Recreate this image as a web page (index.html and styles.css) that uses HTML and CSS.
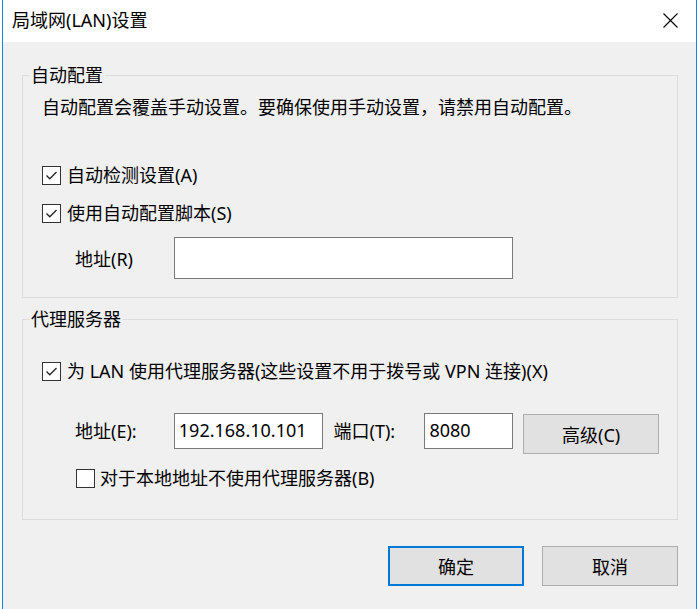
FILE: index.html
```html
<!DOCTYPE html>
<html lang="zh-CN">
<head>
<meta charset="utf-8">
<title>局域网(LAN)设置</title>
<link rel="stylesheet" href="styles.css">
</head>
<body>
<div class="window">
  <div class="titlebar">
    <span class="title">局域网(LAN)设置</span>
    <svg class="close" width="15" height="15" viewBox="0 0 15 15"><path d="M0.5 0.5 L14.5 14.5 M14.5 0.5 L0.5 14.5" stroke="#000" stroke-width="1.1" fill="none"/></svg>
  </div>
  <div class="content">
    <fieldset class="group">
      <legend class="legend">自动配置</legend>
      <div class="group-body auto">
        <div class="desc">自动配置会覆盖手动设置。要确保使用手动设置，请禁用自动配置。</div>
        <label class="check first"><span class="box checked"><svg width="17" height="17" viewBox="0 0 17 17"><path d="M3.5 8.5 L6.8 11.8 L13.5 5" stroke="#222" stroke-width="1.3" fill="none"/></svg></span><span>自动检测设置(A)</span></label>
        <label class="check second"><span class="box checked"><svg width="17" height="17" viewBox="0 0 17 17"><path d="M3.5 8.5 L6.8 11.8 L13.5 5" stroke="#222" stroke-width="1.3" fill="none"/></svg></span><span>使用自动配置脚本(S)</span></label>
        <div class="field-row script">
          <span class="field-label">地址(R)</span>
          <span class="input wide"></span>
        </div>
      </div>
    </fieldset>
    <fieldset class="group proxy">
      <legend class="legend">代理服务器</legend>
      <div class="group-body prox">
        <label class="check"><span class="box checked"><svg width="17" height="17" viewBox="0 0 17 17"><path d="M3.5 8.5 L6.8 11.8 L13.5 5" stroke="#222" stroke-width="1.3" fill="none"/></svg></span><span>为 LAN 使用代理服务器(这些设置不用于拨号或 VPN 连接)(X)</span></label>
        <div class="field-row server">
          <span class="field-label addr">地址(E):</span>
          <span class="input ip">192.168.10.101</span>
          <span class="field-label port">端口(T):</span>
          <span class="input portval">8080</span>
          <span class="btn adv">高级(C)</span>
        </div>
        <label class="check bypass"><span class="box"></span><span>对于本地地址不使用代理服务器(B)</span></label>
      </div>
    </fieldset>
    <div class="actions">
      <span class="btn ok">确定</span>
      <span class="btn">取消</span>
    </div>
  </div>
</div>
</body>
</html>
```

FILE: styles.css
```css
html, body {
  margin: 0;
  padding: 0;
  background: #ffffff;
}
body {
  font-family: "Noto Sans", "Noto Sans CJK SC", sans-serif;
  font-size: 18px;
  color: #000;
}
.window {
  margin-left: 2px;
  width: 695px;
  height: 609px;
  box-sizing: border-box;
  border-left: 1px solid #1883d7;
  border-right: 1px solid #1883d7;
  display: flex;
  flex-direction: column;
  overflow: hidden;
}
.titlebar {
  height: 42px;
  flex: none;
  background: #fff;
  display: flex;
  align-items: center;
  justify-content: space-between;
  padding: 0 18px 2px 9px;
  box-sizing: border-box;
}
.title {
  line-height: 24px;
}
.close {
  display: block;
}
.content {
  flex: 1;
  background: #f0f0f0;
  padding: 21px 18px 0 19px;
  display: flex;
  flex-direction: column;
}
.group {
  margin: 0;
  padding: 0;
  min-width: 0;
  border: 1px solid #dcdcdc;
}
.group.proxy {
  margin-top: 9px;
}
.legend {
  margin-left: 6px;
  padding: 0 2px;
  line-height: 24px;
}
.group-body {
  display: flex;
  flex-direction: column;
  padding: 8px 18px 18px 19px;
}
.group-body.prox {
  padding-top: 28px;
  padding-bottom: 29px;
}
.desc {
  line-height: 24px;
}
.check {
  display: flex;
  align-items: center;
  gap: 6px;
  line-height: 24px;
}
.check.first {
  margin-top: 44px;
}
.check.second {
  margin-top: 14px;
}
.box {
  width: 17px;
  height: 17px;
  border: 1px solid #333;
  background: #fff;
  display: block;
  flex: none;
}
.box svg {
  display: block;
}
.field-row {
  display: flex;
  align-items: center;
  padding-left: 33px;
  margin-top: 12px;
}
.field-row.script .field-label {
  width: 99px;
}
.input {
  box-sizing: border-box;
  background: #fff;
  border: 1px solid #7a7a7a;
  display: block;
  padding: 0 4px;
  line-height: 32px;
}
.input.wide {
  width: 339px;
  height: 42px;
}
.field-row.server {
  margin-top: 30px;
  align-items: flex-start;
}
.field-row.server .field-label {
  line-height: 36px;
}
.field-label.addr {
  width: 99px;
}
.field-label.port {
  width: 91px;
  margin-left: 11px;
}
.input.ip {
  width: 149px;
  height: 36px;
}
.input.portval {
  width: 89px;
  height: 36px;
}
.btn {
  box-sizing: border-box;
  width: 136px;
  height: 40px;
  background: #e1e1e1;
  border: 1px solid #adadad;
  display: flex;
  align-items: center;
  justify-content: center;
}
.btn.adv {
  margin-left: 10px;
  margin-top: 1px;
}
.btn.ok {
  border: 2px solid #0078d7;
}
.check.bypass {
  margin-top: 12px;
  padding-left: 34px;
  gap: 5px;
}
.actions {
  display: flex;
  justify-content: flex-end;
  gap: 18px;
  margin-top: 26px;
}
```
